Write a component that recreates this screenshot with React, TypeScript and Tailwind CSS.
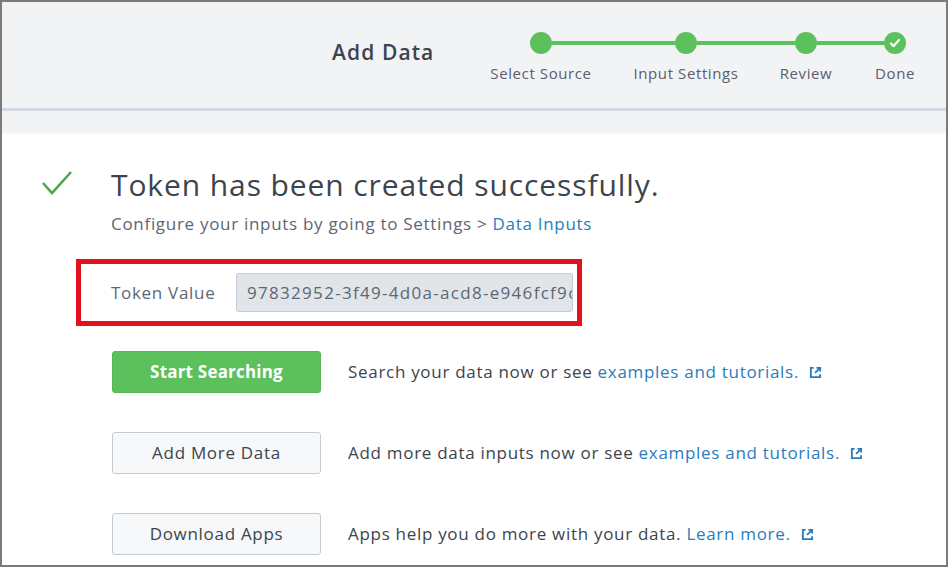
import React from "react";

const font = { fontFamily: '"Open Sans", Lato, "Liberation Sans", sans-serif' };

function ExtIcon() {
  return (
    <svg width="13" height="13" viewBox="0 0 14 14" className="ml-[10px] inline-block align-[-1px]" fill="none" stroke="#2a7cbd" strokeWidth="2">
      <path d="M5 2H2v10h10V9" />
      <path d="M6.5 7.5L12 2" />
      <path d="M8 2h4v4" />
    </svg>
  );
}

function Step({ label, done }: { label: string; done?: boolean }) {
  return (
    <div className="flex w-[22px] flex-col items-center">
      <div className="grid size-[22px] place-items-center rounded-full bg-[#5cc05c]">
        {done && (
          <svg width="12" height="12" viewBox="0 0 12 12" fill="none" stroke="white" strokeWidth="2.2" strokeLinecap="round" strokeLinejoin="round">
            <path d="M2 6.5l2.6 2.6L10 3" />
          </svg>
        )}
      </div>
      <div className="mt-[10px] whitespace-nowrap text-[15px] leading-[18px] tracking-[0.6px] text-[#5c5d6e]">{label}</div>
    </div>
  );
}

function Bar({ w }: { w: string }) {
  return <div className={`mt-[9px] h-[4px] bg-[#5cc05c] ${w}`} />;
}

function ActionRow({
  label,
  primary,
  children,
}: {
  label: string;
  primary?: boolean;
  children: React.ReactNode;
}) {
  return (
    <div className="flex items-center">
      <button
        type="button"
        className={
          primary
            ? "h-[42px] w-[209px] rounded-[3px] border border-[#53b553] bg-[#5cc05c] text-[17px] font-bold tracking-[0.2px] text-white"
            : "h-[42px] w-[209px] rounded-[3px] border border-[#c3cbd4] bg-[#f7f8fa] text-[17px] tracking-[0.7px] text-[#3c444d]"
        }
      >
        {label}
      </button>
      <div className="ml-[27px] text-[17px] tracking-[0.7px] text-[#3c444d]">{children}</div>
    </div>
  );
}

export default function App() {
  return (
    <div style={font} className="h-[567px] w-[948px] overflow-hidden border-2 border-[#7b7b7b] bg-white">
      <div className="flex h-[106px] items-start bg-[#f2f3f5] pl-[330px]">
        <div className="mt-[36px] w-[110px] whitespace-nowrap text-[21px] font-semibold leading-[28px] tracking-[1.1px] text-[#3c444d]">
          Add Data
        </div>
        <div className="ml-[88px] flex items-start pt-[30px]">
          <Step label="Select Source" />
          <Bar w="w-[123px]" />
          <Step label="Input Settings" />
          <Bar w="w-[98px]" />
          <Step label="Review" />
          <Bar w="w-[67px]" />
          <Step label="Done" done />
        </div>
      </div>
      <div className="h-[3px] bg-[#d2d9e0]" />
      <div className="h-[21px] bg-[#f2f3f5]" />
      <div className="h-[3px] bg-gradient-to-b from-[#f2f3f5] to-white" />

      <div className="flex pt-[32px]">
        <div className="w-[109px] pl-[39px] pt-[3px]">
          <svg width="32" height="26" viewBox="0 0 32 26" fill="none" stroke="#4ea64e" strokeWidth="2.6">
            <path d="M2 13l9 10L30 2" />
          </svg>
        </div>
        <div>
          <div className="whitespace-nowrap text-[30px] leading-[36px] tracking-[0.9px] text-[#3c444d]">
            Token has been created successfully.
          </div>
          <div className="mt-[10px] whitespace-nowrap text-[17px] leading-[22px] tracking-[0.7px] text-[#5c6773]">
            Configure your inputs by going to Settings &gt; <span className="text-[#2a7cbd]">Data Inputs</span>
          </div>
        </div>
      </div>

      <div className="ml-[74px] mt-[24px] flex h-[67px] w-[506px] items-center border-[5px] border-[#e3101e] pl-[30px]">
        <div className="w-[125px] whitespace-nowrap text-[17px] tracking-[0.7px] text-[#5c6773]">Token Value</div>
        <input
          readOnly
          value="97832952-3f49-4d0a-acd8-e946fcf9c1a2"
          className="h-[39px] w-[337px] rounded-[3px] border border-[#c3cbd4] bg-[#e1e5e9] pl-[10px] pr-0 text-[17px] tracking-[1.3px] text-[#5c6773] outline-none"
        />
      </div>

      <div className="ml-[110px] mt-[25px] flex flex-col gap-[39px]">
        <ActionRow label="Start Searching" primary>
          Search your data now or see <span className="text-[#2a7cbd]">examples and tutorials.</span>
          <ExtIcon />
        </ActionRow>
        <ActionRow label="Add More Data">
          Add more data inputs now or see <span className="text-[#2a7cbd]">examples and tutorials.</span>
          <ExtIcon />
        </ActionRow>
        <ActionRow label="Download Apps">
          Apps help you do more with your data. <span className="text-[#2a7cbd]">Learn more.</span>
          <ExtIcon />
        </ActionRow>
      </div>
    </div>
  );
}
